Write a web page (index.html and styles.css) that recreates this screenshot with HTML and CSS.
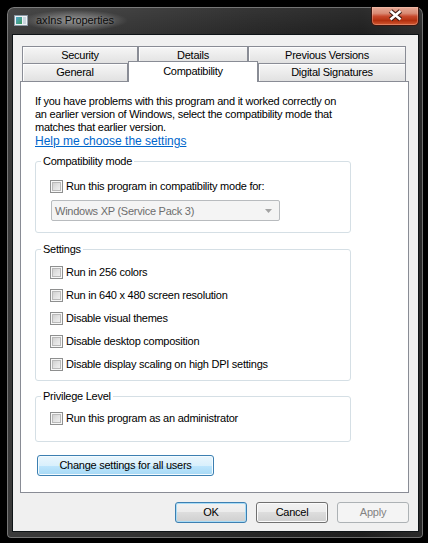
FILE: index.html
```html
<!DOCTYPE html>
<html>
<head>
<meta charset="utf-8">
<title>axIns Properties</title>
<link rel="stylesheet" href="styles.css">
</head>
<body>
<div class="window">
  <div class="titlebar">
    <svg class="app-icon" width="14" height="11" viewBox="0 0 14 11">
      <defs>
        <linearGradient id="ig" x1="0" y1="0" x2="1" y2="1">
          <stop offset="0" stop-color="#4fa3c9"/>
          <stop offset="1" stop-color="#3c9a5e"/>
        </linearGradient>
      </defs>
      <rect x="0.5" y="0.5" width="13" height="10" fill="#eef2f5" stroke="#8b98a4"/>
      <rect x="2" y="2" width="6" height="7" fill="url(#ig)"/>
      <rect x="9" y="2" width="3" height="7" fill="#c9d4de"/>
    </svg>
    <span class="title">axIns Properties</span>
    <div class="close">
      <svg width="48" height="19" viewBox="0 0 48 19">
        <path d="M19.5 5 L29.5 13.5 M29.5 5 L19.5 13.5" stroke="#3a1810" stroke-width="4.8" fill="none"/>
        <path d="M19.5 5 L29.5 13.5 M29.5 5 L19.5 13.5" stroke="#ffffff" stroke-width="2.6" fill="none"/>
      </svg>
    </div>
  </div>
  <div class="client">
    <div class="tabs">
      <div class="tab-row">
        <div class="tab back w-security">Security</div>
        <div class="tab back w-details">Details</div>
        <div class="tab back w-previous">Previous Versions</div>
      </div>
      <div class="tab-row">
        <div class="tab front w-general">General</div>
        <div class="tab front selected w-compat">Compatibility</div>
        <div class="tab front w-digital">Digital Signatures</div>
      </div>
    </div>
    <div class="panel">
      <p class="intro">If you have problems with this program and it worked correctly on<br>an earlier version of Windows, select the compatibility mode that<br>matches that earlier version.</p>
      <a class="help" href="#">Help me choose the settings</a>

      <fieldset class="group">
        <legend>Compatibility mode</legend>
        <div class="group-body compat-body">
          <label class="check"><span class="box"></span><span>Run this program in compatibility mode for:</span></label>
          <div class="select">
            <span>Windows XP (Service Pack 3)</span>
            <svg width="7" height="4" viewBox="0 0 7 4"><path d="M0 0 H7 L3.5 4 Z" fill="#a3a3a3"/></svg>
          </div>
        </div>
      </fieldset>

      <fieldset class="group settings">
        <legend>Settings</legend>
        <div class="group-body settings-body">
          <label class="check"><span class="box"></span><span>Run in 256 colors</span></label>
          <label class="check"><span class="box"></span><span>Run in 640 x 480 screen resolution</span></label>
          <label class="check"><span class="box"></span><span>Disable visual themes</span></label>
          <label class="check"><span class="box"></span><span>Disable desktop composition</span></label>
          <label class="check"><span class="box"></span><span>Disable display scaling on high DPI settings</span></label>
        </div>
      </fieldset>

      <fieldset class="group privilege">
        <legend>Privilege Level</legend>
        <div class="group-body privilege-body">
          <label class="check"><span class="box"></span><span>Run this program as an administrator</span></label>
        </div>
      </fieldset>

      <button class="btn btn-hot all-users">Change settings for all users</button>
    </div>
    <div class="actions">
      <button class="btn btn-default">OK</button>
      <button class="btn">Cancel</button>
      <button class="btn btn-disabled">Apply</button>
    </div>
  </div>
</div>
</body>
</html>
```

FILE: styles.css
```css
* {
  box-sizing: border-box;
}

html, body {
  margin: 0;
  padding: 0;
  background: #000;
}

body {
  width: 428px;
  height: 543px;
  overflow: hidden;
  font-family: "Liberation Sans", Arial, sans-serif;
  font-size: 11px;
  letter-spacing: -0.25px;
  color: #000;
}

.window {
  margin: 7px 0 0 7px;
  width: 416px;
  height: 531px;
  border-radius: 7px 7px 4px 4px;
  background:
    linear-gradient(180deg, rgba(255,255,255,0.07), rgba(255,255,255,0) 30px),
    linear-gradient(90deg, #3a3a3a 0%, #333 30%, #262626 60%, #1e1e1e 85%, #2a2a2a 100%);
  box-shadow: inset 0 0 0 1px rgba(170,170,170,0.55);
  display: flex;
  flex-direction: column;
}

.titlebar {
  height: 28px;
  display: flex;
  align-items: flex-start;
  padding-left: 7px;
}

.app-icon {
  margin-top: 8px;
  flex: none;
}

.title {
  margin: 3px 0 0 -6px;
  padding: 4px 14px;
  font-size: 11px;
  line-height: 13px;
  letter-spacing: -0.1px;
  color: #0a0a0a;
  background: radial-gradient(closest-side, rgba(255,255,255,0.42), rgba(255,255,255,0.22) 55%, rgba(255,255,255,0));
  text-shadow: 0 0 3px rgba(255,255,255,0.25);
}

.close {
  margin-left: auto;
  margin-right: 4px;
  width: 48px;
  height: 19px;
  border: 1px solid #3d1710;
  border-top: none;
  border-radius: 0 0 5px 5px;
  background: linear-gradient(180deg, #e7ab98 0%, #d98a74 35%, #c8492d 52%, #b3300f 75%, #d35a33 100%);
  box-shadow: inset 0 0 0 1px rgba(255,210,190,0.35);
}

.close svg {
  display: block;
  margin: -1px 0 0 -1px;
}

.client {
  margin: 0 5px 0 6px;
  height: 496px;
  background: #f0f0f0;
  padding: 11px 9px 0 7px;
  box-shadow: 0 0 0 1px #0f1417;
}

.tabs {
  margin: 0 3px 0 2px;
}

.tab-row {
  display: flex;
  align-items: flex-start;
}

.tab {
  border: 1px solid #898c95;
  border-bottom: none;
  background: linear-gradient(180deg, #f6f6f6 0%, #ececec 50%, #e1e1e1 100%);
  box-shadow: inset 1px 1px 0 #fdfdfd;
  display: flex;
  align-items: center;
  justify-content: center;
  white-space: nowrap;
  line-height: 13px;
}

.tab.back {
  height: 17px;
}

.tab.front {
  height: 18px;
}

.tab.selected {
  height: 21px;
  margin-top: -2px;
  margin-bottom: -1px;
  padding-bottom: 2px;
  background: #fff;
  box-shadow: none;
  position: relative;
  z-index: 1;
}

.w-security { width: 116px; }
.w-details { width: 110px; }
.w-previous { width: 158px; }
.w-general { width: 106px; }
.w-compat { width: 130px; }
.w-digital { width: 148px; }

.panel {
  height: 412px;
  border: 1px solid #898c95;
  background: #fff;
  padding: 13px 0 0 14px;
}

.intro {
  margin: 0;
  line-height: 13px;
  white-space: nowrap;
}

.help {
  display: block;
  width: max-content;
  font-size: 12px;
  line-height: 15px;
  letter-spacing: 0;
  color: #0066cc;
  text-decoration: underline;
}

.group {
  margin: 6px 0 0;
  padding: 0;
  width: 316px;
  min-inline-size: 0;
  border: 1px solid #d5dfe5;
  border-radius: 3px;
}

.group legend {
  margin-left: 5px;
  padding: 0 2px;
  line-height: 13px;
}

.group.settings {
  margin-top: 10px;
}

.group.privilege {
  margin-top: 9px;
}

.group-body {
  padding-left: 14px;
  display: flex;
  flex-direction: column;
  gap: 10px;
}

.compat-body {
  padding-top: 12px;
  padding-bottom: 11px;
  gap: 7px;
}

.settings-body {
  padding-top: 10px;
  padding-bottom: 9px;
}

.privilege-body {
  padding-top: 9px;
  padding-bottom: 16px;
}

.check {
  display: flex;
  align-items: center;
  gap: 3px;
  height: 13px;
  line-height: 13px;
  white-space: nowrap;
}

.box {
  flex: none;
  width: 13px;
  height: 13px;
  border: 1px solid #8e8f8f;
  background: linear-gradient(135deg, #c6c6c6 0%, #e2e2e2 50%, #f7f7f7 100%);
  box-shadow: inset 0 0 0 1px #f7f7f7, inset 0 0 0 2px #b9b9b9;
}

.select {
  margin-left: 1px;
  width: 229px;
  height: 21px;
  border: 1px solid #b8bbbe;
  border-radius: 2px;
  background: #f4f4f4;
  color: #6d6d6d;
  display: flex;
  align-items: center;
  justify-content: space-between;
  padding: 0 7px 0 3px;
  white-space: nowrap;
}

.btn {
  font-family: "Liberation Sans", Arial, sans-serif;
  font-size: 11px;
  letter-spacing: -0.25px;
  color: #000;
  height: 21px;
  width: 72px;
  padding: 0;
  border: 1px solid #707070;
  border-radius: 3px;
  background: linear-gradient(180deg, #f2f2f2 0%, #ebebeb 50%, #dddddd 50%, #cfcfcf 100%);
  box-shadow: inset 0 0 0 1px #fbfbfb;
  line-height: 13px;
}

.btn-default {
  border-color: #3c7fb1;
  box-shadow: inset 0 0 0 1px #a9dcf6;
}

.btn-hot {
  border-color: #3c7fb1;
  background: linear-gradient(180deg, #eaf6fd 0%, #d9f0fc 50%, #bee6fd 50%, #a7d9f5 100%);
  box-shadow: inset 0 0 0 1px #f3fbff;
}

.btn-disabled {
  border-color: #adb2b5;
  background: #f4f4f4;
  box-shadow: none;
  color: #838383;
}

.all-users {
  display: block;
  width: 177px;
  margin: 13px 0 0 2px;
}

.actions {
  display: flex;
  justify-content: flex-end;
  gap: 9px;
  margin-top: 9px;
}
```
